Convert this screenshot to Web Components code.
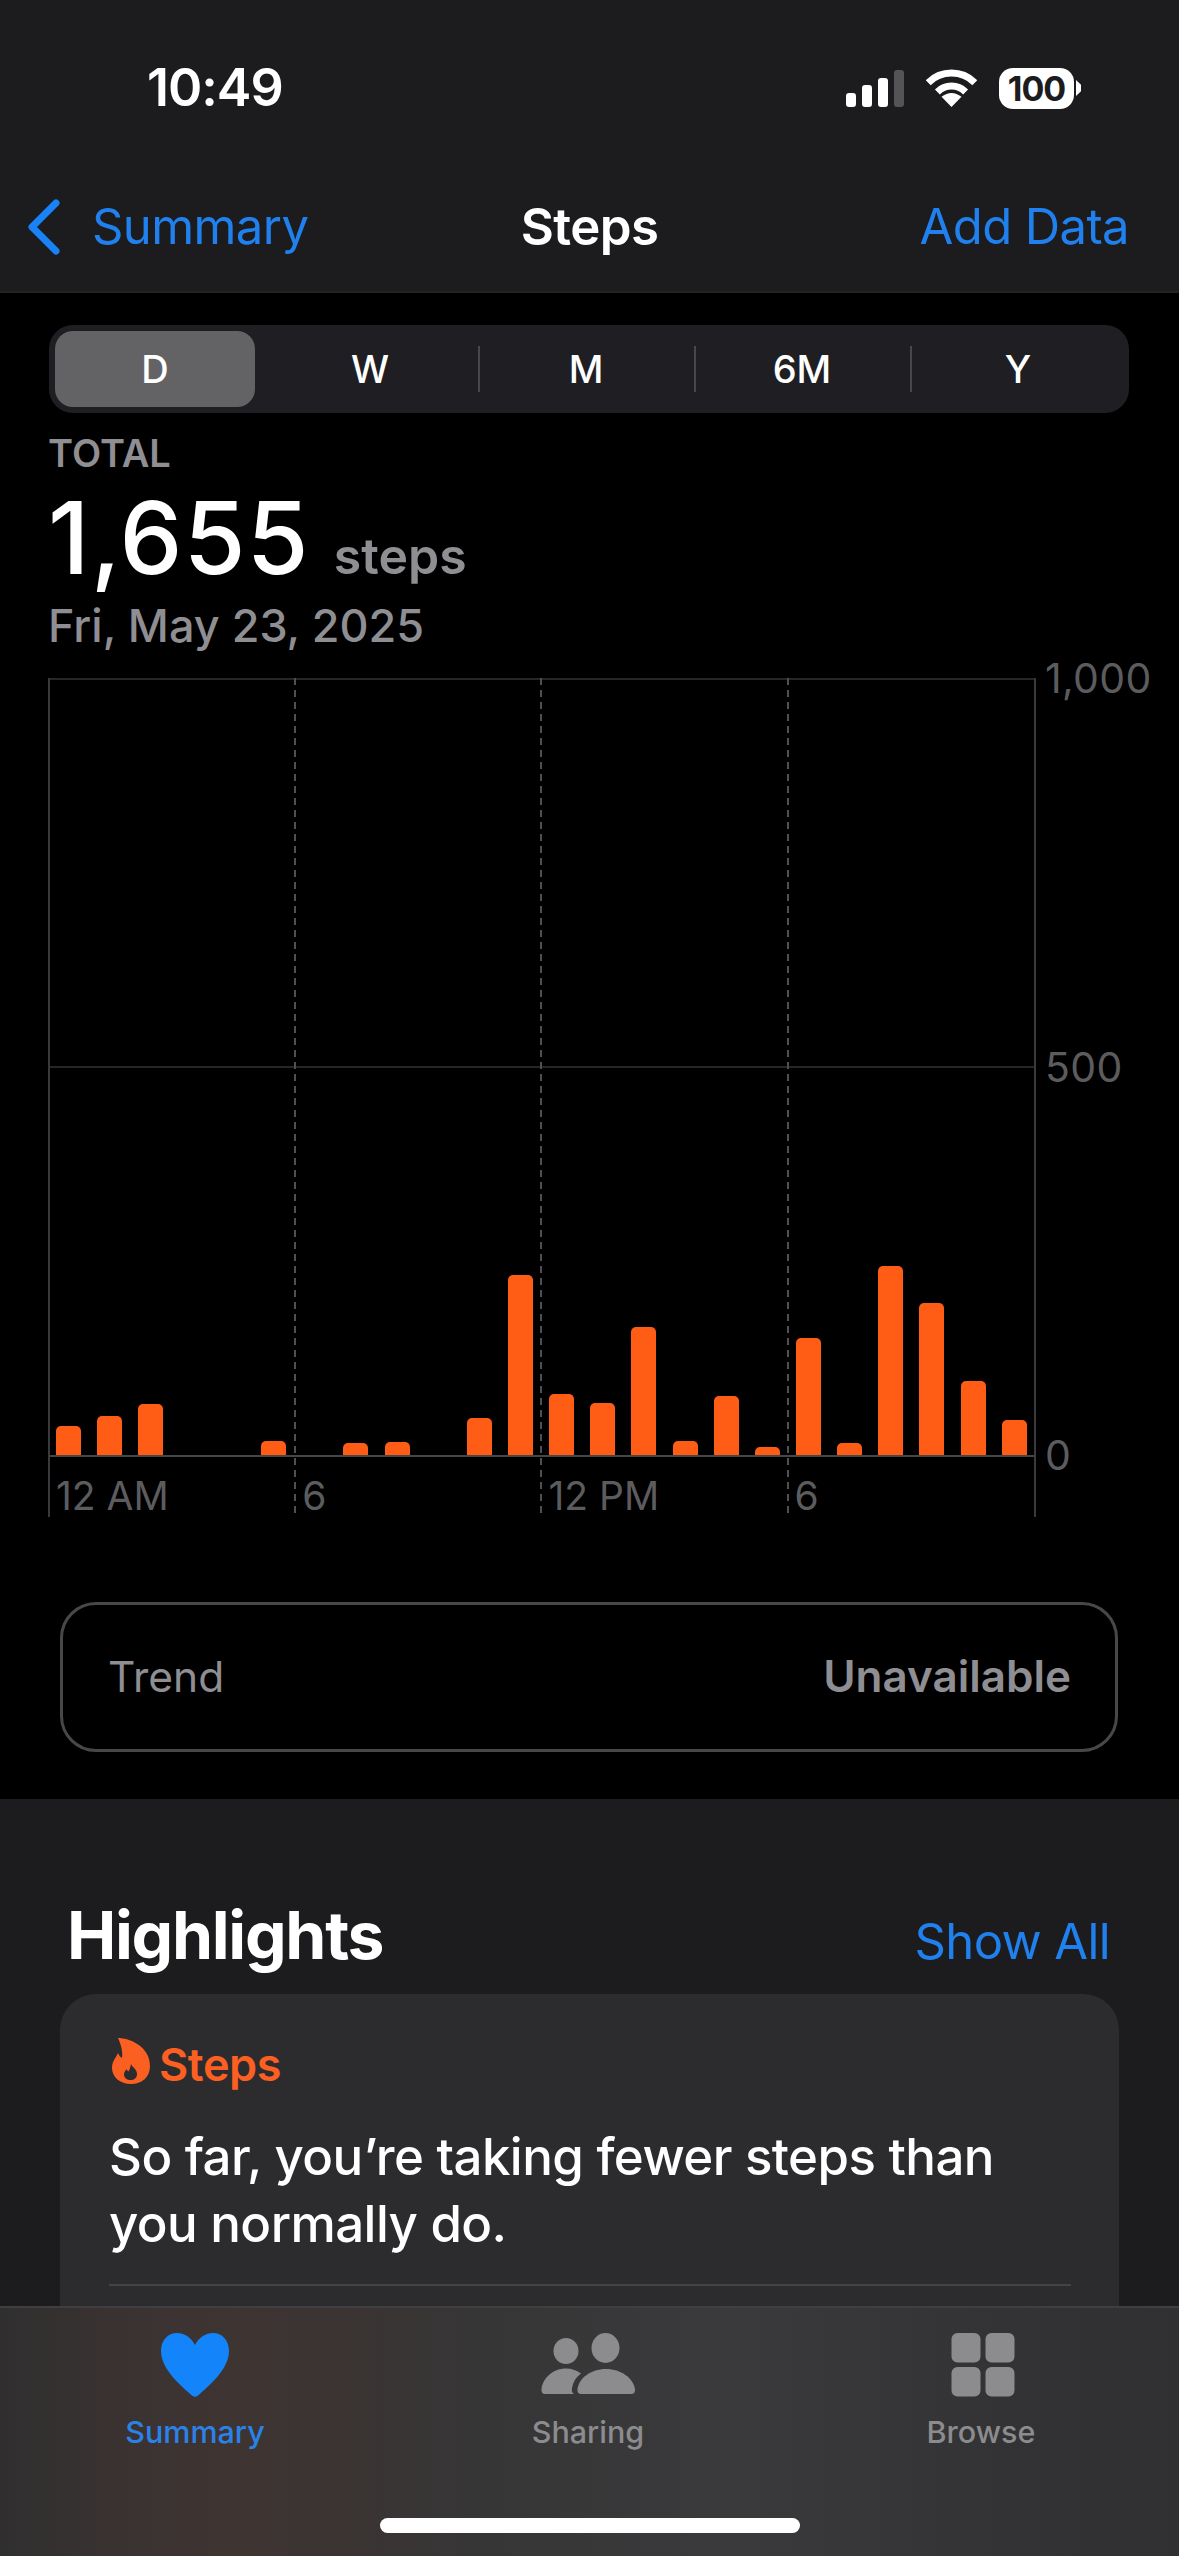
<!DOCTYPE html>
<html lang="en">
  <head>
    <meta charset="UTF-8" />
    <title>Steps</title>
    <style>
      html,
      body {
        margin: 0;
        background: #000;
      }
      body {
        position: relative;
        width: 1179px;
        height: 2556px;
        overflow: hidden;
        font-family: Inter, 'Noto Sans', sans-serif;
        color: #fff;
      }
    </style>
  </head>
  <body>
    <status-bar time="10:49" battery="100"></status-bar>
    <nav-bar back="Summary" action="Add Data">Steps</nav-bar>
    <main-panel>
      <segment-control items="D,W,M,6M,Y"></segment-control>
      <step-total label="TOTAL" value="1,655" unit="steps" date="Fri, May 23, 2025"></step-total>
      <step-chart></step-chart>
      <trend-row label="Trend" value="Unavailable"></trend-row>
    </main-panel>
    <highlights-section title="Highlights" action="Show All">
      <highlight-card label="Steps">So far, you’re taking fewer steps than you normally do.</highlight-card>
    </highlights-section>
    <tab-bar>
      <tab-item icon="heart" active>Summary</tab-item>
      <tab-item icon="people">Sharing</tab-item>
      <tab-item icon="grid">Browse</tab-item>
    </tab-bar>

    <script>
      const BLUE = '#1f80ee'
      const GREY = '#8e8e93'
      const ORANGE = '#ff5c16'

      class StatusBar extends HTMLElement {
        constructor() {
          super()
          this.attachShadow({ mode: 'open' })
        }
        connectedCallback() {
          this.shadowRoot.innerHTML = `
            <style>
              :host { display: flex; box-sizing: border-box; height: 150px; padding: 26px 98px 0 147px; align-items: center; justify-content: space-between; background: #1c1c1e; }
              .time { font-size: 52px; line-height: 50px; font-weight: 600; letter-spacing: -1px; }
              .icons { display: flex; align-items: center; }
              .signal { display: flex; align-items: flex-end; gap: 6px; height: 37px; margin-right: 22px; }
              .signal i { width: 10px; background: #fff; border-radius: 3px; }
              .signal i:last-child { background: #545456; }
              svg { display: block; }
              .battery { width: 75px; height: 41px; margin-left: 22px; border-radius: 14px; background: #fff; color: #1c1c1e; font-size: 34px; font-weight: 700; letter-spacing: -1px; line-height: 41px; text-align: center; }
              .nub { width: 5px; height: 16px; margin-left: 2px; background: #fff; clip-path: polygon(0 0, 100% 30%, 100% 70%, 0 100%); }
            </style>
            <span class="time">${this.getAttribute('time')}</span>
            <div class="icons">
              <div class="signal">
                <i style="height:14px"></i><i style="height:22px"></i><i style="height:29px"></i><i style="height:37px"></i>
              </div>
              <svg width="51" height="38" viewBox="0 0 51 38" fill="none" stroke="#fff" stroke-width="7">
                <path d="M2.2 13.7a33 33 0 0 1 46.6 0" />
                <path d="M11.4 22.9a20 20 0 0 1 28.2 0" />
                <path d="M25.5 38 15.5 27.8q10-7.6 20 0z" fill="#fff" stroke="none" />
              </svg>
              <div class="battery">${this.getAttribute('battery')}</div>
              <div class="nub"></div>
            </div>`
        }
      }

      class NavBar extends HTMLElement {
        constructor() {
          super()
          this.attachShadow({ mode: 'open' })
        }
        connectedCallback() {
          this.shadowRoot.innerHTML = `
            <style>
              :host { display: grid; grid-template-columns: 1fr auto 1fr; box-sizing: border-box; height: 143px; padding-top: 12px; align-items: center; background: #1c1c1e; border-bottom: 2px solid #232325; font-size: 49px; line-height: 60px; letter-spacing: -.6px; }
              .back { display: flex; align-items: center; gap: 32px; margin-left: 28px; color: ${BLUE}; }
              .title { font-size: 51px; font-weight: 600; }
              .action { justify-self: end; margin-right: 50px; color: ${BLUE}; }
              svg { display: block; }
            </style>
            <div class="back">
              <svg width="32" height="56" viewBox="0 0 32 56" fill="none" stroke="#1a82f7" stroke-width="7" stroke-linecap="round" stroke-linejoin="round">
                <path d="M28 4 4 28l24 24" />
              </svg>
              <span>${this.getAttribute('back')}</span>
            </div>
            <div class="title"><slot></slot></div>
            <div class="action">${this.getAttribute('action')}</div>`
        }
      }

      class MainPanel extends HTMLElement {
        constructor() {
          super()
          this.attachShadow({ mode: 'open' })
          this.shadowRoot.innerHTML = `
            <style>
              :host { display: block; box-sizing: border-box; height: 1506px; padding: 32px 0 0 48px; background: #000; }
            </style>
            <slot></slot>`
        }
      }

      class SegmentControl extends HTMLElement {
        constructor() {
          super()
          this.attachShadow({ mode: 'open' })
        }
        connectedCallback() {
          const items = this.getAttribute('items').split(',')
          const cells = items
            .map((t, i) => `<div class="cell${i == 0 ? ' on' : ''}${i > 1 ? ' sep' : ''}"><span>${t}</span></div>`)
            .join('')
          this.shadowRoot.innerHTML = `
            <style>
              :host { display: block; width: 1080px; height: 88px; margin-left: 1px; border-radius: 24px; background: #1f1f23; }
              .row { display: grid; grid-template-columns: repeat(5, 216px); height: 88px; margin-left: -3px; }
              .cell { position: relative; display: flex; align-items: center; justify-content: center; font-size: 38px; font-weight: 500; }
              .cell.on span { display: flex; align-items: center; justify-content: center; width: 200px; height: 76px; margin-left: 2px; border-radius: 18px; background: #636366; }
              .cell.sep::before { content: ''; position: absolute; left: 0; top: 21px; height: 46px; width: 2px; background: #48484c; }
            </style>
            <div class="row">${cells}</div>`
        }
      }

      class StepTotal extends HTMLElement {
        constructor() {
          super()
          this.attachShadow({ mode: 'open' })
        }
        connectedCallback() {
          this.shadowRoot.innerHTML = `
            <style>
              :host { display: block; margin-top: 18px; color: ${GREY}; }
              .label { font-size: 38px; line-height: 44px; font-weight: 600; }
              .line { display: flex; align-items: baseline; gap: 24px; height: 110px; line-height: 110px; margin-top: 8px; }
              .num { font-size: 100px; color: #fff; font-weight: 500; letter-spacing: 1.200px; }
              .unit { font-size: 50px; font-weight: 600; }
              .date { font-size: 45px; line-height: 50px; font-weight: 500; margin-top: 8px; }
            </style>
            <div class="label">${this.getAttribute('label')}</div>
            <div class="line"><span class="num">${this.getAttribute('value')}</span><span class="unit">${this.getAttribute('unit')}</span></div>
            <div class="date">${this.getAttribute('date')}</div>`
        }
      }

      class StepChart extends HTMLElement {
        constructor() {
          super()
          this.attachShadow({ mode: 'open' })
        }
        connectedCallback() {
          // bar height per hour, 0 = no bar
          const hours = [29, 39, 51, 0, 0, 14, 0, 12, 13, 0, 37, 180, 61, 52, 128, 14, 59, 8, 117, 12, 189, 152, 74, 35]
          const bars = hours.map((h) => `<div class="slot">${h ? `<i style="height:${h}px"></i>` : ''}</div>`).join('')
          const xLabels = ['12 AM', '6', '12 PM', '6'].map((t) => `<div class="col"><span>${t}</span></div>`).join('')
          this.shadowRoot.innerHTML = `
            <style>
              :host { display: grid; grid-template-columns: 988px auto; column-gap: 9px; margin-top: 27px; height: 839px; font-size: 39px; color: #5c5c5e; }
              .plot { display: grid; grid-template: 777px 62px / 988px; }
              .hgrid, .cols, .bars { grid-area: 1 / 1 / 3 / 2; }
              .hgrid { display: grid; grid-template-rows: 388px 389px 62px; }
              .hgrid div { border-top: 2px solid #262628; }
              .hgrid div:nth-child(3) { border-top-color: #46464a; }
              .cols { display: grid; grid-template-columns: repeat(4, 246.200px); border-right: 2px solid #3a3a3c; }
              .col { padding: 798px 0 0 8px; background: repeating-linear-gradient(to bottom, #505052 0 7px, transparent 7px 12px) left top / 2px 100% no-repeat; line-height: 40px; }
              .col:first-child { background: linear-gradient(#3a3a3c, #3a3a3c) left top / 2px 100% no-repeat; }
              .bars { display: grid; grid-template-columns: repeat(24, 41.150px); align-items: end; height: 777px; padding-left: 7.500px; }
              .slot { display: flex; align-items: flex-end; height: 100%; }
              .slot i { display: block; width: 25px; background: ${ORANGE}; border-radius: 5px 5px 0 0; }
              .axis { display: flex; flex-direction: column; justify-content: space-between; height: 777px; font-size: 41px; letter-spacing: .3px; }
              .axis span { display: flex; align-items: center; height: 0; }
            </style>
            <div class="plot">
              <div class="hgrid"><div></div><div></div><div></div></div>
              <div class="cols">${xLabels}</div>
              <div class="bars">${bars}</div>
            </div>
            <div class="axis"><span>1,000</span><span>500</span><span>0</span></div>`
        }
      }

      class TrendRow extends HTMLElement {
        constructor() {
          super()
          this.attachShadow({ mode: 'open' })
        }
        connectedCallback() {
          this.shadowRoot.innerHTML = `
            <style>
              :host { display: flex; align-items: center; justify-content: space-between; box-sizing: border-box; width: 1058px; height: 150px; margin: 85px 0 0 12px; padding: 0 44px 2px 45px; border: 3px solid #48484a; border-radius: 36px; color: ${GREY}; font-size: 44px; }
              span { font-size: 42.500px; }
              b { font-weight: 600; }
            </style>
            <span>${this.getAttribute('label')}</span>
            <b>${this.getAttribute('value')}</b>`
        }
      }

      class HighlightsSection extends HTMLElement {
        constructor() {
          super()
          this.attachShadow({ mode: 'open' })
        }
        connectedCallback() {
          this.shadowRoot.innerHTML = `
            <style>
              :host { display: block; box-sizing: border-box; height: 757px; padding: 96px 60px 0; background: #1c1c1e; }
              .head { display: flex; align-items: baseline; justify-content: space-between; padding: 0 9px 0 7px; height: 80px; line-height: 80px; }
              h2 { margin: 0; font-size: 66px; font-weight: 700; letter-spacing: -1.300px; }
              a { color: ${BLUE}; font-size: 49px; letter-spacing: -.6px; }
              .body { margin-top: 19px; }
            </style>
            <div class="head">
              <h2>${this.getAttribute('title')}</h2>
              <a>${this.getAttribute('action')}</a>
            </div>
            <div class="body"><slot></slot></div>`
        }
      }

      class HighlightCard extends HTMLElement {
        constructor() {
          super()
          this.attachShadow({ mode: 'open' })
        }
        connectedCallback() {
          this.shadowRoot.innerHTML = `
            <style>
              :host { display: block; box-sizing: border-box; height: 500px; padding: 45px 48px 0 49px; border-radius: 36px; background: #2c2c2e; }
              .tag { display: flex; align-items: center; gap: 9px; height: 50px; padding-left: 3px; color: #fb5f22; font-size: 45px; font-weight: 600; }
              .tag span { letter-spacing: -.4px; }
              svg { display: block; margin-top: -6px; }
              .text { margin-top: 34px; font-size: 51px; line-height: 67px; font-weight: 500; letter-spacing: -.55px; }
              hr { margin: 27px 0 0; border: 0; border-top: 2px solid #444446; }
            </style>
            <div class="tag">
              <svg width="38" height="46" viewBox="0 0 38 46">
                <path fill="#fb5f22" fill-rule="evenodd" d="M6 0C17 0 38 8 38 28 38 39 30 46 19 46 8 46 0 39 0 30 0 23 4 20 6 15 7 17 8 19 10 20 11 13 9 7 6 0ZM19 26C20 29 25 31 25 36 25 40 22 42 18.500 42 15 42 12 40 12 36.500 12 34 13.500 32.500 14.500 31 15 32 15.500 33 16.500 33.500 17.500 31.500 18.500 29 19 26Z" />
              </svg>
              <span>${this.getAttribute('label')}</span>
            </div>
            <div class="text"><slot></slot></div>
            <hr />`
        }
      }

      class TabBar extends HTMLElement {
        constructor() {
          super()
          this.attachShadow({ mode: 'open' })
          this.shadowRoot.innerHTML = `
            <style>
              :host { position: absolute; left: 0; right: 0; bottom: 0; display: block; box-sizing: border-box; height: 250px; padding-top: 25px; border-top: 2px solid #3f3f41; background: linear-gradient(90deg, #302f2f 0, #3b3332 12%, #3e3432 20%, #3a3433 30%, #363637 42%, #3a3a3c 62%, #333335 85%, #303032 100%); }
              .tabs { display: grid; grid-template-columns: repeat(3, 393px); margin-left: -1.500px; }
              .home { width: 420px; height: 15px; margin: 68px auto 0; border-radius: 8px; background: #fff; }
            </style>
            <div class="tabs"><slot></slot></div>
            <div class="home"></div>`
        }
      }

      const TAB_ICONS = {
        heart: `<svg width="68" height="64" viewBox="0 0 68 64"><path fill="#1484fb" d="M34 12C30 4 23 0 16 0 7 0 0 7 0 18 0 36 20 53 31 62.500 33 64.200 35 64.200 37 62.500 48 53 68 36 68 18 68 7 61 0 52 0 45 0 38 4 34 12Z" /></svg>`,
        people: `<svg width="94" height="64" viewBox="0 0 94 64" fill="currentColor"><ellipse cx="64.500" cy="15" rx="14" ry="15" /><ellipse cx="25" cy="18" rx="12.500" ry="13" /><path d="M40 61H90Q94.500 61 94 56C92 45 80 36 65 36 50 36 38 45 36.500 56Q36 61 40 61Z" /><path d="M4 61H33C31 60 30.500 58 31 55 32 49 35 44 40 40.500 36 37.500 31 35.500 25 35.500 13 35.500 2 44 .5 56Q0 61 4 61Z" /></svg>`,
        grid: `<svg width="64" height="64" viewBox="0 0 64 64" fill="currentColor" style="margin-left:3px"><rect x="0.500" y="0" width="29" height="29.500" rx="6" /><rect x="34.500" y="0" width="29" height="29.500" rx="6" /><rect x="0.500" y="34" width="29" height="29.500" rx="6" /><rect x="34.500" y="34" width="29" height="29.500" rx="6" /></svg>`,
      }

      class TabItem extends HTMLElement {
        constructor() {
          super()
          this.attachShadow({ mode: 'open' })
        }
        connectedCallback() {
          this.shadowRoot.innerHTML = `
            <style>
              :host { display: flex; flex-direction: column; align-items: center; gap: 17px; color: #8c8c8e; font-size: 30.500px; line-height: 36px; font-weight: 500; }
              :host([active]) { color: #2a82e8; }
              .icon { height: 64px; }
              .icon svg { display: block; }
            </style>
            <div class="icon">${TAB_ICONS[this.getAttribute('icon')]}</div>
            <div><slot></slot></div>`
        }
      }

      customElements.define('status-bar', StatusBar)
      customElements.define('nav-bar', NavBar)
      customElements.define('main-panel', MainPanel)
      customElements.define('segment-control', SegmentControl)
      customElements.define('step-total', StepTotal)
      customElements.define('step-chart', StepChart)
      customElements.define('trend-row', TrendRow)
      customElements.define('highlights-section', HighlightsSection)
      customElements.define('highlight-card', HighlightCard)
      customElements.define('tab-bar', TabBar)
      customElements.define('tab-item', TabItem)
    </script>
  </body>
</html>
